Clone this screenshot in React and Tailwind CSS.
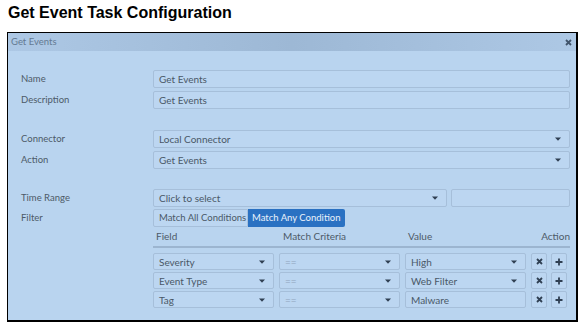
const Caret = () => (
  <svg width="6" height="4" viewBox="0 0 6 4" className="shrink-0">
    <path d="M0 0.5 L6 0.5 L3 3.8 Z" fill="#2f3f52" />
  </svg>
);

function Field({ value, caret = false, muted = false, className = '' }) {
  return (
    <div
      className={`flex items-center justify-between rounded-[2px] border border-[#a6bfda] bg-[#bcd6f1] pl-[5px] pr-[8px] text-[10px] ${muted ? 'text-[#8ea4bc]' : 'text-[#4a5867]'} ${className}`}
    >
      <span className="leading-none">{value}</span>
      {caret && <Caret />}
    </div>
  );
}

function Row({ label, children, className = '' }) {
  return (
    <div className={`flex items-center ${className}`}>
      <div className="w-[132px] shrink-0 text-[9.5px] text-[#4d5a68]">{label}</div>
      <div className="flex-1 flex gap-[4px]">{children}</div>
    </div>
  );
}

function IconBtn({ kind }) {
  return (
    <div className="flex h-[17px] w-[16px] items-center justify-center rounded-[2px] border border-[#a6bfda] bg-[#bcd6f1]">
      {kind === 'x' ? (
        <svg width="7" height="7" viewBox="0 0 7 7">
          <path d="M1 1 L6 6 M6 1 L1 6" stroke="#2f3f52" strokeWidth="1.8" />
        </svg>
      ) : (
        <svg width="8" height="8" viewBox="0 0 8 8">
          <path d="M4 0.5 V7.5 M0.5 4 H7.5" stroke="#2f3f52" strokeWidth="1.8" />
        </svg>
      )}
    </div>
  );
}

const conditions = [
  { field: 'Severity', value: 'High', valueCaret: true },
  { field: 'Event Type', value: 'Web Filter', valueCaret: true },
  { field: 'Tag', value: 'Malware', valueCaret: false },
];

export default function App() {
  return (
    <div className="h-[326px] w-[582px] overflow-hidden bg-white font-['Lato',sans-serif]">
      <div className="h-[32px] pl-[8px] pt-[3px] font-['Liberation_Sans',Arial,sans-serif] text-[16px] font-bold leading-[20px] text-black">
        Get Event Task Configuration
      </div>
      <div className="ml-[7px] flex h-[290px] w-[571px] flex-col border-b-2 border-l border-r-2 border-t border-black bg-[#b9d4ef]">
        <div className="flex h-[18px] items-center justify-between bg-gradient-to-r from-[#adc8e5] via-[#9db8d5] to-[#adc8e5] pl-[3px] pr-[4px]">
          <span className="text-[9.5px] text-[#647a92]">Get Events</span>
          <svg width="7" height="7" viewBox="0 0 7 7">
            <path d="M1 1 L6 6 M6 1 L1 6" stroke="#41546b" strokeWidth="1.8" />
          </svg>
        </div>

        <div className="flex flex-col pl-[13px] pr-[6px] pt-[19px]">
          <div className="flex flex-col gap-[3px]">
            <Row label="Name">
              <Field value="Get Events" className="h-[18px] flex-1" />
            </Row>
            <Row label="Description">
              <Field value="Get Events" className="h-[18px] flex-1" />
            </Row>
          </div>

          <div className="mt-[21px] flex flex-col gap-[3px]">
            <Row label="Connector">
              <Field value="Local Connector" caret className="h-[18px] flex-1" />
            </Row>
            <Row label="Action">
              <Field value="Get Events" caret className="h-[18px] flex-1" />
            </Row>
          </div>

          <div className="mt-[20px] flex flex-col gap-[2px]">
            <Row label="Time Range">
              <Field value="Click to select" caret className="h-[18px] w-[294px]" />
              <Field value="" className="h-[18px] flex-1" />
            </Row>
            <Row label="Filter">
              <div className="flex h-[18px] text-[9.5px]">
                <div className="flex w-[95px] items-center rounded-l-[2px] border border-[#a6bfda] bg-[#bcd6f1] pl-[5px] text-[#4a5867]">
                  Match All Conditions
                </div>
                <div className="flex w-[97px] items-center rounded-r-[2px] bg-[#2a71c2] pl-[4px] text-[#eaf2fb]">
                  Match Any Condition
                </div>
              </div>
            </Row>
          </div>

          <div className="ml-[132px] flex flex-col">
            <div className="flex h-[21px] items-center border-b-2 border-[#9cb5d0] text-[10px] text-[#4d5a68]">
              <div className="w-[126px] pl-[3px]">Field</div>
              <div className="w-[126px] pl-[4px]">Match Criteria</div>
              <div className="w-[126px] pl-[3px]">Value</div>
              <div className="flex-1 text-right">Action</div>
            </div>
            <div className="mt-[5px] flex flex-col gap-[2px]">
              {conditions.map((c) => (
                <div key={c.field} className="flex h-[17px] gap-[5px]">
                  <Field value={c.field} caret className="w-[121px]" />
                  <Field value="==" caret muted className="w-[121px]" />
                  <Field value={c.value} caret={c.valueCaret} className="w-[121px]" />
                  <div className="flex gap-[4px]">
                    <IconBtn kind="x" />
                    <IconBtn kind="plus" />
                  </div>
                </div>
              ))}
            </div>
          </div>
        </div>
      </div>
    </div>
  );
}
